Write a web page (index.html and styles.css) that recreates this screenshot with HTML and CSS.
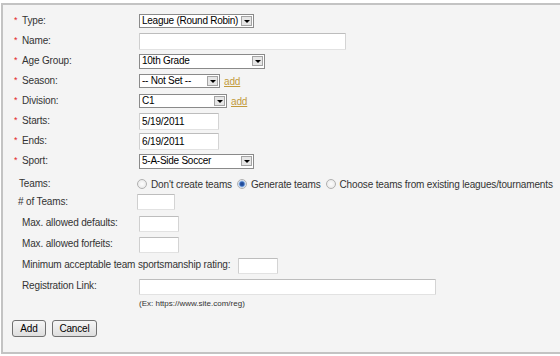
FILE: index.html
```html
<!DOCTYPE html>
<html lang="en">

<head>
    <meta charset="UTF-8">
    <title>Add League</title>
    <link rel="stylesheet" href="styles.css">
</head>

<body>
    <div class="panel">
        <form class="edit-form">
            <!-- Required fields -->
            <div class="row">
                <label class="label"><span class="req">*</span>Type:</label>
                <span class="select w-type"><select><option>League (Round Robin)</option></select><span class="arrow"></span></span>
            </div>
            <div class="row">
                <label class="label"><span class="req">*</span>Name:</label>
                <input type="text" class="text w-name">
            </div>
            <div class="row">
                <label class="label"><span class="req">*</span>Age Group:</label>
                <span class="select w-age"><select><option>10th Grade</option></select><span class="arrow"></span></span>
            </div>
            <div class="row">
                <label class="label"><span class="req">*</span>Season:</label>
                <span class="select w-season"><select><option>-- Not Set --</option></select><span class="arrow"></span></span>
                <a class="add-link" href="#">add</a>
            </div>
            <div class="row">
                <label class="label"><span class="req">*</span>Division:</label>
                <span class="select w-division"><select><option>C1</option></select><span class="arrow"></span></span>
                <a class="add-link" href="#">add</a>
            </div>
            <div class="row">
                <label class="label"><span class="req">*</span>Starts:</label>
                <input type="text" class="text w-date" value="5/19/2011">
            </div>
            <div class="row">
                <label class="label"><span class="req">*</span>Ends:</label>
                <input type="text" class="text w-date" value="6/19/2011">
            </div>
            <div class="row">
                <label class="label"><span class="req">*</span>Sport:</label>
                <span class="select w-sport"><select><option>5-A-Side Soccer</option></select><span class="arrow"></span></span>
            </div>

            <!-- Teams -->
            <div class="row row-teams">
                <label class="label label-plain">Teams:</label>
                <span class="radios">
                    <label class="radio"><input type="radio" name="teams">Don't create teams</label>
                    <label class="radio"><input type="radio" name="teams" checked>Generate teams</label>
                    <label class="radio"><input type="radio" name="teams">Choose teams from existing leagues/tournaments</label>
                </span>
            </div>
            <div class="row row-count">
                <label class="label label-count"># of Teams:</label>
                <input type="text" class="text w-count">
            </div>

            <!-- Options -->
            <div class="options">
                <div class="row row-option">
                    <label class="label label-option">Max. allowed defaults:</label>
                    <input type="text" class="text w-small">
                </div>
                <div class="row row-option">
                    <label class="label label-option">Max. allowed forfeits:</label>
                    <input type="text" class="text w-small">
                </div>
                <div class="row row-option">
                    <label class="label label-option label-auto">Minimum acceptable team sportsmanship rating:</label>
                    <input type="text" class="text w-small">
                </div>
                <div class="row row-option">
                    <label class="label label-option">Registration Link:</label>
                    <input type="text" class="text w-link">
                </div>
                <div class="hint">(Ex: https://www.site.com/reg)</div>
            </div>

            <!-- Buttons -->
            <div class="buttons">
                <button type="button" class="btn btn-add">Add</button>
                <button type="button" class="btn btn-cancel">Cancel</button>
            </div>
        </form>
    </div>
</body>

</html>
```

FILE: styles.css
```css
html,
body {
    margin: 0;
    overflow: hidden;
}

body {
    font-family: "Liberation Sans", Arial, sans-serif;
    font-size: 10px;
    letter-spacing: -0.15px;
    color: #333;
    background: #fff;
}

.panel {
    margin: 3px 0 0 1px;
    height: 351px;
    box-sizing: border-box;
    border: 2px solid #c3c3c3;
    border-right: 0;
    background: #f4f4f4;
    padding-top: 6px;
}

.row {
    display: flex;
    align-items: center;
    height: 20px;
    white-space: nowrap;
}

.label {
    width: 136px;
    flex-shrink: 0;
    box-sizing: border-box;
    padding-left: 11px;
    margin-bottom: 2px;
}

.req {
    display: inline-block;
    width: 8px;
    color: #e3252a;
    font-size: 9px;
    vertical-align: top;
    line-height: 10px;
}

/* Text inputs */
.text {
    flex-shrink: 0;
    height: 17px;
    box-sizing: border-box;
    margin: 0;
    padding: 1px 2px;
    border: 1px solid;
    border-color: #bdbdbd #d4d4d4 #e2e2e2 #cfcfcf;
    border-radius: 1px;
    background: #fff;
    font-family: inherit;
    font-size: 10px;
    letter-spacing: inherit;
    color: #000;
    outline: none;
}

.w-name { width: 207px; }
.w-date { width: 80px; }
.w-count { width: 38px; height: 16px; margin-left: -2px; }
.w-small { width: 40px; height: 16px; }
.w-link { width: 297px; height: 16px; }

/* Drop-downs */
.select {
    flex-shrink: 0;
    display: flex;
    align-items: center;
    height: 14px;
    box-sizing: border-box;
    border: 1px solid #8a8a8a;
    background: #fff;
}

.select select {
    flex: 1;
    min-width: 0;
    -webkit-appearance: none;
    appearance: none;
    border: 0;
    margin: 0;
    padding: 0 0 0 2px;
    background: transparent;
    font-family: inherit;
    font-size: 10px;
    letter-spacing: -0.25px;
    color: #000;
    height: 12px;
    line-height: 12px;
    outline: none;
}

.select .arrow {
    width: 11px;
    height: 10px;
    margin-right: 1px;
    box-sizing: border-box;
    border: 1px solid #a4a4a4;
    background: #e6e6e6;
    display: flex;
    align-items: center;
    justify-content: center;
}

.select .arrow::after {
    content: "";
    border-left: 3px solid transparent;
    border-right: 3px solid transparent;
    border-top: 3px solid #000;
}

.w-type { width: 115px; }
.w-age { width: 126px; height: 15px; }
.w-season { width: 81px; }
.w-division { width: 88px; }
.w-sport { width: 115px; height: 15px; }

.add-link {
    margin-left: 4px;
    color: #c29a3c;
    font-size: 10px;
}

/* Teams */
.row-teams {
    margin-top: 3px;
}

.label-plain {
    padding-left: 16px;
}

.radios {
    display: flex;
    align-items: center;
    margin-left: -2px;
}

.radio {
    flex-shrink: 0;
    display: flex;
    align-items: center;
    margin-right: 5px;
    color: #333;
}

.radio input {
    -webkit-appearance: none;
    appearance: none;
    flex-shrink: 0;
    width: 10px;
    height: 10px;
    margin: 0 4px 0 0;
    border: 1px solid #b0b0b0;
    border-radius: 50%;
    background: radial-gradient(circle at 50% 50%, #fdfdfd 0, #e4e4e4 100%);
}

.radio input:checked {
    background: radial-gradient(circle at 50% 50%, #1d3f86 0, #2c5db0 2px, #9fc0ea 3px, #f4f4f4 4px, #e4e4e4 100%);
}

.row-count {
    height: 16px;
}

.label-count {
    padding-left: 15px;
}

/* Options */
.options {
    margin-top: 3px;
}

.row-option {
    height: 21px;
}

.label-option {
    padding-left: 19px;
}

.label-auto {
    width: auto;
    margin-right: 8px;
}

.hint {
    padding-left: 136px;
    font-size: 8px;
    letter-spacing: 0;
    height: 10px;
    line-height: 10px;
    margin-top: 2px;
}

/* Buttons */
.buttons {
    display: flex;
    gap: 6px;
    margin-top: 11px;
    padding-left: 9px;
}

.btn {
    height: 17px;
    padding: 0;
    border: 1px solid #707070;
    border-radius: 3px;
    background: linear-gradient(#f6f6f6, #dedede);
    font-family: inherit;
    font-size: 10px;
    letter-spacing: inherit;
    color: #000;
}

.btn-add { width: 34px; }
.btn-cancel { width: 45px; }
```
